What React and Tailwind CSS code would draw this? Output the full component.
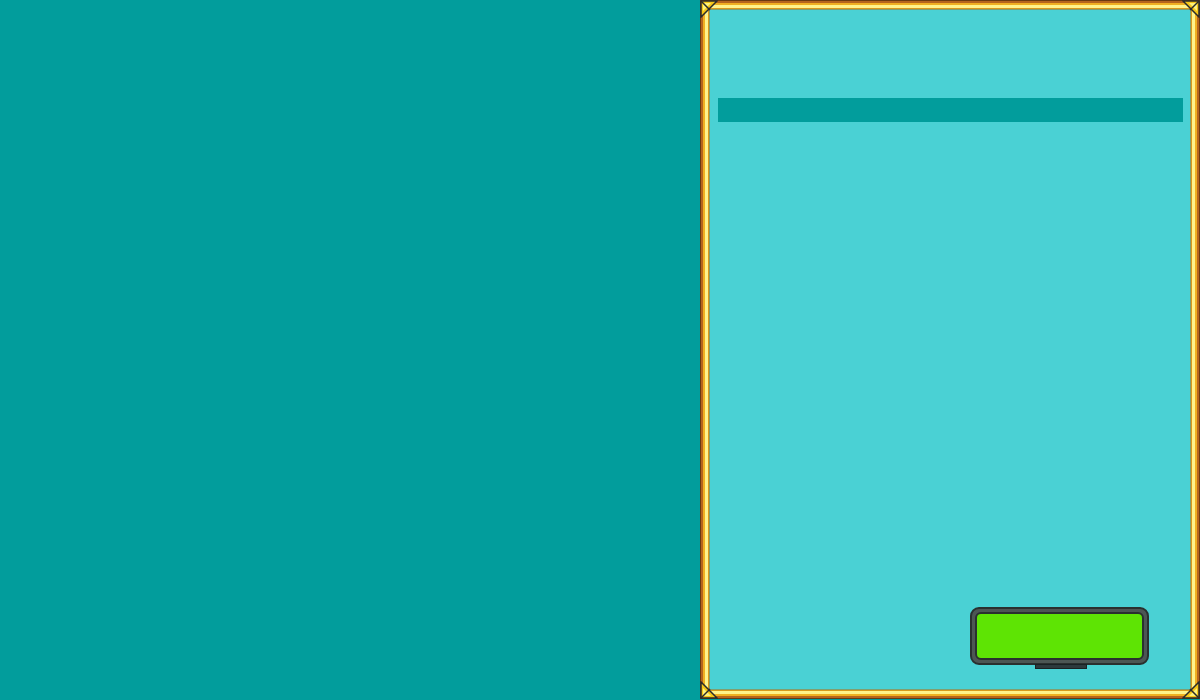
function Corner({ className, rotate }) {
  return (
    <svg className={`absolute w-[18px] h-[18px] ${className}`} viewBox="0 0 18 18" style={{ transform: `rotate(${rotate}deg)` }}>
      <path d="M1 1 L17 1 L1 17 Z" fill="#f5c518" stroke="#2b2b2b" strokeWidth="1.5" />
      <path d="M3 3 L11 3 L3 11 Z" fill="#fff27a" />
      <path d="M1 1 L10 10" stroke="#2b2b2b" strokeWidth="1.5" />
    </svg>
  );
}

export default function App() {
  return (
    <div className="flex w-[1200px] h-[700px] bg-[#029d9c] overflow-hidden">
      <div className="flex-1" />
      <div className="relative w-[500px] h-[699px]">
        <div className="h-full border border-[#6b3a10]">
          <div className="h-full border-2 border-[#b5651d]">
            <div className="h-full border-2 border-[#f0b020]">
              <div className="h-full border-[3px] border-[#fff38a]">
                <div className="h-full border border-[#d99a1c]">
                  <div className="h-full border border-[#7f9e70] bg-[#4ad1d4] flex flex-col pl-[8px] pr-[7px] pt-[88px] pb-[24px]">
                    <div className="h-[24px] bg-[#029d9c]" />
                    <div className="flex-1" />
                    <div className="flex justify-end pr-[34px]">
                      <div className="relative">
                        <div className="w-[179px] h-[58px] rounded-[9px] bg-[#4c5654] border-2 border-[#2a302f] p-[3px]">
                          <div className="h-full rounded-[6px] bg-[#5ee404] border-2 border-[#2a302f]" />
                        </div>
                        <div className="absolute left-[65px] -bottom-[4px] w-[52px] h-[5px] bg-[#2d3a3d] border border-[#1a2224]" />
                      </div>
                    </div>
                  </div>
                </div>
              </div>
            </div>
          </div>
        </div>
        <Corner className="left-0 top-0" rotate={0} />
        <Corner className="right-0 top-0" rotate={90} />
        <Corner className="right-0 bottom-0" rotate={180} />
        <Corner className="left-0 bottom-0" rotate={270} />
      </div>
    </div>
  );
}
